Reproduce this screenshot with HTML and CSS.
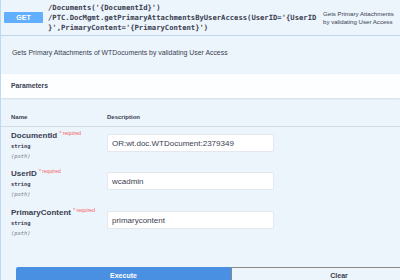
FILE: index.html
```html
<!DOCTYPE html>
<html lang="en">
<head>
    <meta charset="UTF-8">
    <title>GET PrimaryAttachments</title>
    <link rel="stylesheet" href="styles.css">
</head>
<body>
    <div class="opblock">
        <div class="summary">
            <span class="method">GET</span>
            <span class="path">/Documents('{DocumentId}')<br>/PTC.DocMgmt.getPrimaryAttachmentsByUserAccess(UserID='{UserID<br>}',PrimaryContent='{PrimaryContent}')</span>
            <span class="summary-desc">Gets Primary Attachments by validating User Access</span>
        </div>

        <div class="op-body">
            <div class="op-desc">Gets Primary Attachments of WTDocuments by validating User Access</div>

            <div class="section-header">
                <h4>Parameters</h4>
            </div>

            <table class="params">
                <thead>
                    <tr>
                        <th class="col-name">Name</th>
                        <th>Description</th>
                    </tr>
                </thead>
                <tbody>
                    <tr>
                        <td class="col-name">
                            <div class="param-name">DocumentId <span class="required">*&nbsp;required</span></div>
                            <div class="param-type">string</div>
                            <div class="param-in">(path)</div>
                        </td>
                        <td><input type="text" value="OR:wt.doc.WTDocument:2379349"></td>
                    </tr>
                    <tr>
                        <td class="col-name">
                            <div class="param-name">UserID <span class="required">*&nbsp;required</span></div>
                            <div class="param-type">string</div>
                            <div class="param-in">(path)</div>
                        </td>
                        <td><input type="text" value="wcadmin"></td>
                    </tr>
                    <tr class="last">
                        <td class="col-name">
                            <div class="param-name">PrimaryContent <span class="required">*&nbsp;required</span></div>
                            <div class="param-type">string</div>
                            <div class="param-in">(path)</div>
                        </td>
                        <td><input type="text" value="primarycontent"></td>
                    </tr>
                </tbody>
            </table>

            <div class="actions">
                <button class="btn execute">Execute</button>
                <button class="btn clear">Clear</button>
            </div>
        </div>
    </div>
</body>
</html>
```

FILE: styles.css
```css
* {
    box-sizing: border-box;
    margin: 0;
    padding: 0;
    font-family: 'Liberation Sans', Arial, sans-serif;
}

body {
    background-color: #ecf4fc;
    color: #3b4151;
    overflow: hidden;
}

.opblock {
    background-color: #ecf4fc;
    border-left: 1px solid #bcd8f4;
    height: 280px;
    overflow: hidden;
}

.summary {
    display: flex;
    align-items: center;
    height: 36px;
    padding: 0 4px 0 3px;
    border-bottom: 1px solid #bcd6f0;
}

.method {
    flex: none;
    width: 39px;
    height: 11px;
    line-height: 11px;
    background-color: #61affe;
    color: white;
    font-size: 7px;
    font-weight: bold;
    text-align: center;
    border-radius: 1px;
    margin-right: 5px;
}

.path {
    flex: 1;
    min-width: 0;
    white-space: nowrap;
    font-family: 'DejaVu Sans Mono', monospace;
    font-weight: bold;
    font-size: 7.2px;
    line-height: 10px;
    color: #3b4151;
}

.summary-desc {
    flex: none;
    width: 73px;
    font-size: 6.1px;
    line-height: 8px;
    color: #3b4151;
}

.op-desc {
    padding: 12px 11px 16px;
    font-size: 6.9px;
    line-height: 10px;
}

.section-header {
    background-color: rgba(255, 255, 255, 0.85);
    box-shadow: 0 1px 2px rgba(0, 0, 0, 0.1);
    padding: 7px 10px;
}

.section-header h4 {
    font-size: 6.8px;
    line-height: 10px;
    font-weight: bold;
}

.params {
    width: 100%;
    border-collapse: collapse;
    margin-top: 1px;
}

.params th {
    text-align: left;
    font-size: 6px;
    font-weight: bold;
    line-height: 8px;
    padding: 14px 0 5px;
    border-bottom: 1px solid #d2dbe6;
}

.params td {
    vertical-align: top;
    padding: 4px 0;
}

.params tr.last td {
    padding-top: 5px;
}

.col-name {
    width: 106px;
    padding-left: 10px !important;
}

.param-name {
    font-size: 8px;
    font-weight: bold;
    line-height: 10px;
    white-space: nowrap;
}

.required {
    position: relative;
    top: -3px;
    font-size: 5px;
    font-weight: normal;
    color: #f35e5e;
}

.param-type {
    font-family: 'DejaVu Sans Mono', monospace;
    font-weight: bold;
    font-size: 5.4px;
    line-height: 10px;
}

.param-in {
    font-family: 'DejaVu Sans Mono', monospace;
    font-style: italic;
    font-size: 5.4px;
    line-height: 10px;
    color: #808080;
}

.params input {
    display: block;
    margin-top: 3px;
    width: 167px;
    height: 18px;
    padding: 0 4px;
    border: 1px solid #e4e8ee;
    border-radius: 2px;
    background-color: white;
    font-size: 8px;
    color: #3b4151;
}

.actions {
    display: grid;
    grid-template-columns: 215px 215px;
    margin: 25px 0 0 15px;
}

.btn {
    height: 16px;
    font-size: 7px;
    font-weight: bold;
    cursor: pointer;
}

.execute {
    background-color: #4990e2;
    color: white;
    border: none;
    border-radius: 2px 0 0 2px;
}

.clear {
    background-color: transparent;
    color: #3b4151;
    border: 1.5px solid #888;
    border-right: none;
    border-bottom: none;
}
```
